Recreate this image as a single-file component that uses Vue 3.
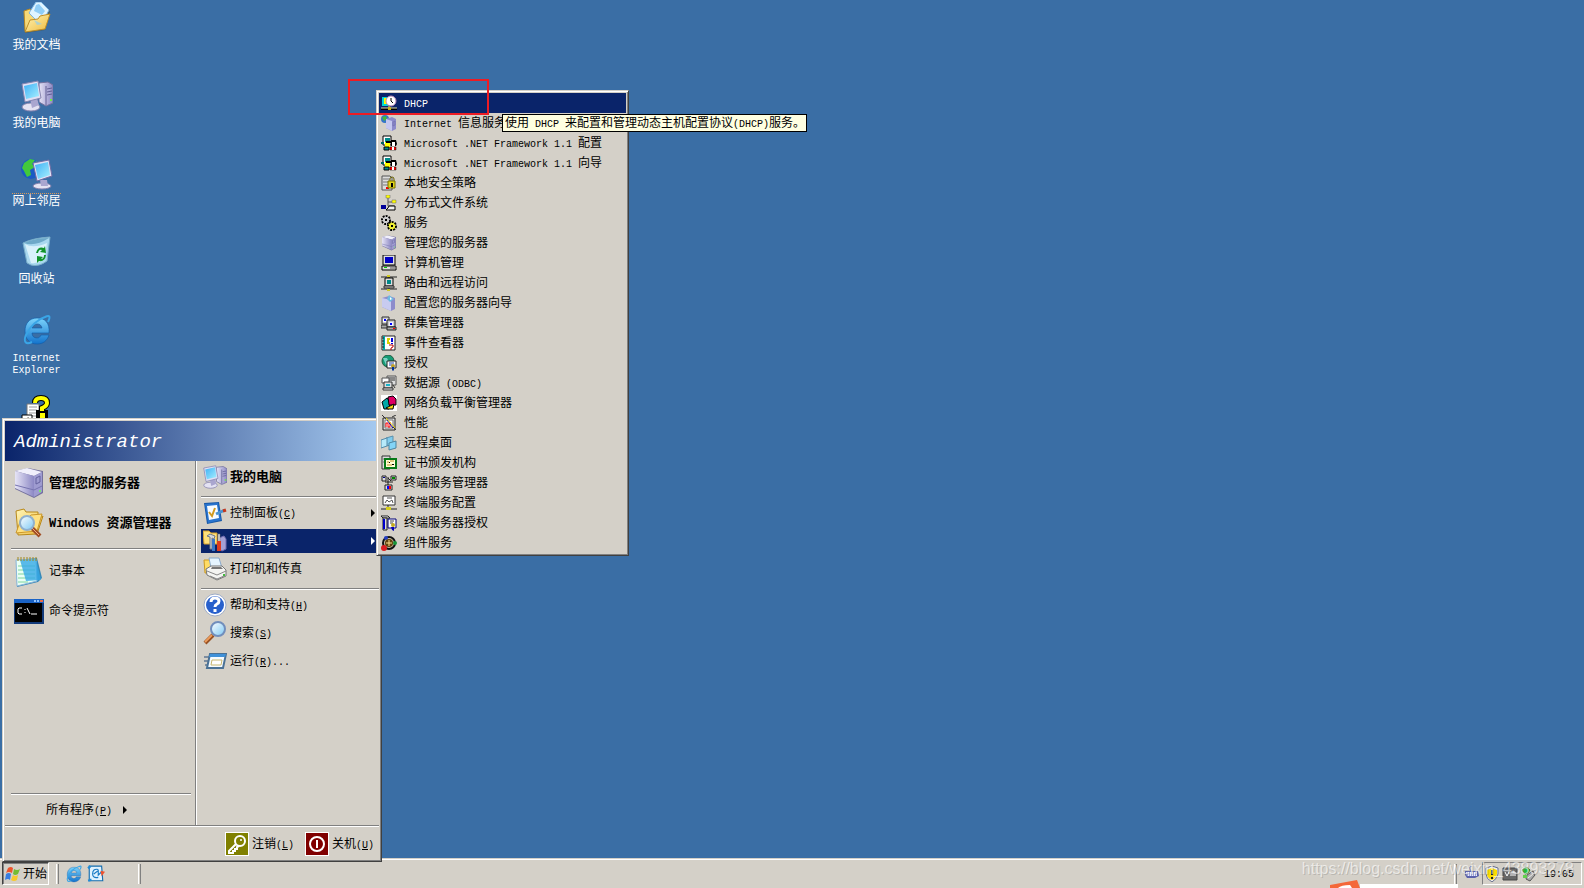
<script setup>
import { h } from 'vue'

// Latin runs use a half-width face; "&" marks the access key that follows it.
const Label = ({ text }) => {
  const parts = text.split(/([\x20-\x7e]+)/).filter(Boolean)
  return h('span', { class: 'label' }, parts.map((part) => {
    if (!/^[\x20-\x7e]+$/.test(part)) return part
    const at = part.indexOf('&')
    if (at < 0) return h('span', { class: 'latin' }, part)
    return h('span', { class: 'latin' }, [part.slice(0, at), h('u', part[at + 1]), part.slice(at + 2)])
  }))
}
Label.props = ['text']

const desktopIcons = [
  { icon: 'docs', text: '我的文档' },
  { icon: 'computer', text: '我的电脑' },
  { icon: 'network', text: '网上邻居', focus: true },
  { icon: 'bin', text: '回收站' },
  { icon: 'ie', text: 'Internet Explorer' },
  { icon: 'help-doc', text: '' },
]
const pinned = [
  { icon: 'server', text: '管理您的服务器' },
  { icon: 'explorer', text: 'Windows 资源管理器' },
]
const recent = [
  { icon: 'notepad', text: '记事本' },
  { icon: 'cmd', text: '命令提示符' },
]
const tools = [
  { icon: 'control', text: '控制面板(&C)', more: true },
  { icon: 'admin', text: '管理工具', more: true, active: true },
  { icon: 'printer', text: '打印机和传真' },
]
const help = [
  { icon: 'help', text: '帮助和支持(&H)' },
  { icon: 'search', text: '搜索(&S)' },
  { icon: 'run', text: '运行(&R)...' },
]
const adminTools = [
  ['dhcp', 'DHCP'],
  ['iis', 'Internet 信息服务'],
  ['dotnet', 'Microsoft .NET Framework 1.1 配置'],
  ['dotnet', 'Microsoft .NET Framework 1.1 向导'],
  ['policy', '本地安全策略'],
  ['dfs', '分布式文件系统'],
  ['services', '服务'],
  ['server', '管理您的服务器'],
  ['manage', '计算机管理'],
  ['routing', '路由和远程访问'],
  ['wizard', '配置您的服务器向导'],
  ['cluster', '群集管理器'],
  ['events', '事件查看器'],
  ['license', '授权'],
  ['odbc', '数据源 (ODBC)'],
  ['nlb', '网络负载平衡管理器'],
  ['perf', '性能'],
  ['remote', '远程桌面'],
  ['cert', '证书颁发机构'],
  ['tsmanager', '终端服务管理器'],
  ['tsconfig', '终端服务配置'],
  ['tslicense', '终端服务器授权'],
  ['component', '组件服务'],
]
</script>

<template>
  <svg class="defs" aria-hidden="true">
    <defs>
      <linearGradient id="g-screen" x1="0" y1="0" x2="1" y2="1"><stop offset="0" stop-color="#3fb0f5"/><stop offset="1" stop-color="#a6f0ff"/></linearGradient>
      <linearGradient id="g-box" x1="0" y1="0" x2="1" y2="0"><stop offset="0" stop-color="#e6e4f6"/><stop offset="1" stop-color="#8c88c4"/></linearGradient>
      <linearGradient id="g-folder" x1="0" y1="0" x2="1" y2="1"><stop offset="0" stop-color="#fff6b8"/><stop offset="1" stop-color="#eeb93c"/></linearGradient>
      <linearGradient id="g-glass" x1="0" y1="0" x2="1" y2="1"><stop offset="0" stop-color="#fff"/><stop offset="1" stop-color="#7cc8f4"/></linearGradient>
      <linearGradient id="g-ie" x1="0" y1="0" x2="0" y2="1"><stop offset="0" stop-color="#7bd3fb"/><stop offset="1" stop-color="#1373cc"/></linearGradient>
    </defs>
    <symbol id="docs" viewBox="0 0 32 32">
      <path d="M4 31 3 9l8-2 3 3 14-3 1 6-5 15z" fill="#5a4a20" opacity=".5"/>
      <path d="M3 9l6-2 3 3 11-2 1 18L4 29z" fill="#f6d978" stroke="#b98923"/>
      <path d="M15 0h5l8 8-8 15-12-12z" fill="#dff4ff" stroke="#7cb4e0"/>
      <path d="M15 3l3-1 6 7-3 4-8-4z" fill="#8fcdf6"/>
      <path d="M4 30 9 18l8-1 2-3 10-2-5 15z" fill="url(#g-folder)" stroke="#c08f28"/>
      <path d="M13 18l8 4-5 1z" fill="#8fcff0" opacity=".7"/>
    </symbol>
    <symbol id="computer" viewBox="0 0 32 32">
      <path d="M18 3l9-1 5 3v18l-7 3-7-4z" fill="url(#g-box)" stroke="#74719e"/>
      <path d="M25 6v19M26 9l5-1M26 12l5-1M26 15l5-1" stroke="#625f94"/><path d="M29 19h2v2h-2z" fill="#6df03c"/>
      <ellipse cx="10" cy="27" rx="9" ry="4" fill="#e4e2f2" stroke="#8581ad"/><path d="M9 19l7-1 2 7-7 3z" fill="#aaa6cf"/>
      <path d="M1 4l16-3 3 17-16 4z" fill="#e0dff4" stroke="#8785b0"/><path d="M3 6l13-3 2 13-13 3z" fill="url(#g-screen)"/>
    </symbol>
    <symbol id="network" viewBox="0 0 32 32">
      <circle cx="10" cy="11" r="10" fill="#195bc4"/><path d="M3 5l6-4 5 1-3 4 3 3-5 3 1 5-4 2-3-6-2-3z" fill="#42c93c"/><path d="M15 3l4 4-2 2-4-2z" fill="#54d44a"/>
      <ellipse cx="21" cy="28" rx="9" ry="3" fill="#e4e2f2" stroke="#8581ad"/><path d="M19 22h7l1 6h-7z" fill="#aaa6cf"/>
      <path d="M12 5l16-3 3 16-15 5z" fill="#e0dff4" stroke="#706da4"/><path d="M14 7l13-3 2 13-12 4z" fill="url(#g-screen)"/>
    </symbol>
    <symbol id="bin" viewBox="0 0 32 32">
      <path d="M2 7Q12 2 29 1l-3 24q-8 6-16 4L6 27z" fill="#a9d8ef" stroke="#79adc9"/><path d="M4 8q8 5 22-1l-3 17q-7 4-13 3z" fill="#eafaff" opacity=".75"/><path d="M3 7Q14 11 28 2 14 2 3 7z" fill="#6ea9c8"/>
      <path d="M15 17q2-7 8-5l1-2 1 7-6-1 2-2q-3-1-4 3z" fill="#12942b"/><path d="M25 19q-1 7-7 6l-2 2v-7l6 1-2 2q3 0 3-4z" fill="#12942b"/>
    </symbol>
    <symbol id="ie" viewBox="0 0 32 32">
      <path d="M16 4C8 4 4 10 4 17c0 8 5 13 12 13 6 0 10-3 12-9h-8c-1 2-2 3-4 3-3 0-5-2-5-5h17C29 9 24 4 16 4zm-5 10c1-3 3-4 5-4 3 0 4 1 5 4z" fill="url(#g-ie)" fill-rule="evenodd" stroke="#0d5ba8" stroke-width=".6"/>
      <path d="M27 8c2-4 3-8-3-5-7 2-15 9-19 18-3 7 0 10 6 7" fill="none" stroke="#3aa5e6" stroke-width="2"/>
    </symbol>
    <symbol id="help-doc" viewBox="0 -3 32 32">
      <path d="M6 9h12v24H6z" fill="#fff" stroke="#777"/><path d="M8 12h8M8 15h8M8 18h8M8 21h8" stroke="#999"/>
      <path d="M1 20h10v11H1z" fill="#fff" stroke="#000"/><path d="M4 28l3-6 3 4z"/>
      <path d="M14 8q0-5 6-5t6 5q0 3-5 5v3M18 18h6v4h-6z" fill="none" stroke="#000" stroke-width="6"/><path d="M14 8q0-5 6-5t6 5q0 3-5 5v3" fill="none" stroke="#ff0" stroke-width="4"/><path d="M19 18h5v5h-5z" fill="#ff0"/>
    </symbol>
    <symbol id="server" viewBox="0 0 32 32">
      <path d="M2 4l13-3 15 3v22l-9 5L2 22z" fill="#74719d"/><path d="M2 4l12-3 15 4-8 4z" fill="#f0effb"/>
      <path d="M2 4l19 5v21L2 21z" fill="url(#g-box)"/><path d="M21 9l8-4v20l-8 5z" fill="#9e9bd0"/>
      <path d="M2 18l19 5 8-4" fill="none" stroke="#7774b0"/><path d="M23 11l4-2v6l-4 2z" fill="none" stroke="#65629f"/><circle cx="27" cy="24" r="1" fill="#6dff50"/>
    </symbol>
    <symbol id="explorer" viewBox="0 0 32 32">
      <path d="M3 4l8-2 2 3h12v7l5-3-6 18-19 1z" fill="url(#g-folder)" stroke="#b88819"/><path d="M3 26L8 12l7-1 3-3 11-1-5 17z" fill="#ffe181" stroke="#cb972b"/>
      <path d="M19 21l8 8" stroke="#a14e26" stroke-width="4"/><path d="M19 21l7 7" stroke="#f1ac7d" stroke-width="1"/><circle cx="14" cy="16" r="7" fill="url(#g-glass)" stroke="#8fb0cf" stroke-width="2"/>
    </symbol>
    <symbol id="notepad" viewBox="0 0 32 32">
      <path d="M3 5l21-2 5 20-4 4L4 32z" fill="#3688b7"/><path d="M3 5l20-1 1 22L4 31z" fill="#e9fff4" stroke="#8db6db"/>
      <path d="M5 11h17M5 15h17M5 19h17M5 23h17M5 27h10" stroke="#7fd3a0"/><path d="M7 5l16-1 5 21-15 1z" fill="#35a9e6" opacity=".8"/><path d="M5 2v4M8 2v4M11 2v4M14 2v4M17 2v4M20 2v4M23 2v4" stroke="#a0881c" stroke-width="1"/>
    </symbol>
    <symbol id="cmd" viewBox="0 0 32 32">
      <path d="M1 4h30v25H1z" fill="#123a7a"/><path d="M1 4h30v4H1z" fill="#1a63c6"/><path d="M21 5h2v2h-2zM24 5h2v2h-2z" fill="#8ec2ff"/><path d="M27 5h3v2h-3z" fill="#e86b4a"/><path d="M2 8h27v19H2z"/>
      <path d="M9 13H6l-1 1v4l1 1h3M12 14v1M12 17v1M14 13l3 6M18 19h6" fill="none" stroke="#fff"/>
    </symbol>
    <symbol id="control" viewBox="0 0 24 24">
      <path d="M1 2l15-1 3 19-15 3z" fill="#1859a9"/><path d="M2 3l13-1 3 17-13 3z" fill="#2874cf"/><path d="M4 5l10-1 2 13-10 2z" fill="#f8fcff"/><path d="M6 11l3 4 3-8" fill="none" stroke="#d09a20" stroke-width="2"/>
      <path d="M13 13l9-4" stroke="#4a93d0" stroke-width="3"/><path d="M20 10l3-1" stroke="#c7371c" stroke-width="3"/>
    </symbol>
    <symbol id="admin" viewBox="0 0 24 24">
      <path d="M0 2h6l2 2h6v11H1z" fill="#ffe07a" stroke="#d7a12b"/><path d="M16 9l5-2 2 3v10l-4 2-3-2z" fill="#a4a0d5" stroke="#706bb0"/>
      <path d="M4 7l3-2 5 2-1 3-2-1v11H7V8z" fill="#d6d8dc" stroke="#707985"/><path d="M9 10h3v12H9z" fill="#3b77c7"/><path d="M15 5h2v8h-2z" fill="#d7d7d7" stroke="#777" stroke-width=".5"/><path d="M14 12h4v10h-4z" fill="#db3b1e"/>
    </symbol>
    <symbol id="printer" viewBox="0 0 24 24">
      <path d="M1 3h5l2 2h3v11H2z" fill="#ffdc65" stroke="#cd9a22"/><path d="M6 1h10l3 10H8z" fill="#e5f4ff" stroke="#88a8ca"/><path d="M3 12l5-3h11l4 4v6l-9 4-10-5z" fill="#f4f4f2" stroke="#777"/><path d="M4 14l10 4 9-4M7 19l7 3 7-3" fill="none" stroke="#888"/><path d="M9 10h9l2 2H8z" fill="#777"/><path d="M20 17h2v2h-2z" fill="#42ba3c"/>
    </symbol>
    <symbol id="help" viewBox="0 0 24 24"><circle cx="12" cy="12" r="11" fill="#fff" stroke="#9dabc5"/><circle cx="12" cy="12" r="9" fill="#2860cc"/><path d="M8 9q0-4 4-4t4 3q0 2-2 3t-2 3M12 16v3" fill="none" stroke="#fff" stroke-width="3"/></symbol>
    <symbol id="search" viewBox="0 0 24 24"><path d="M10 14l-8 8" stroke="#965023" stroke-width="4"/><path d="M9 14l-7 7" stroke="#ed9c5c" stroke-width="2"/><circle cx="15" cy="8" r="7" fill="url(#g-glass)" stroke="#718ebc" stroke-width="2"/></symbol>
    <symbol id="run" viewBox="0 0 24 24"><path d="M1 8h7M1 12h6M2 16h4" stroke="#7d8da0" stroke-width="2"/><path d="M7 5h16l-3 14H4z" fill="#f5fbff" stroke="#4a7195" stroke-width="2"/><path d="M7 5h16l-1 3H6z" fill="#3f91d9"/><path d="M9 11h10l-1 5H8z" fill="#fff" stroke="#c8b66e"/></symbol>
    <symbol id="key" viewBox="0 0 24 24"><path d="M0 0h24v24H0z" fill="#fff"/><path d="M1 1h22v22H1z" fill="#808000"/><circle cx="15" cy="9" r="5" fill="none" stroke="#fff" stroke-width="2"/><path d="M11 12l-7 7v2h4v-2h2v-2h2v-2l2-1" fill="none" stroke="#fff" stroke-width="2"/><circle cx="16" cy="8" r="1" fill="#fff"/></symbol>
    <symbol id="power" viewBox="0 0 24 24"><path d="M0 0h24v24H0z" fill="#fff"/><path d="M1 1h22v22H1z" fill="#800000"/><circle cx="12" cy="12" r="7" fill="none" stroke="#fff" stroke-width="2"/><path d="M12 8v8" stroke="#fff" stroke-width="2"/></symbol>
    <symbol id="flag" viewBox="0 0 16 16"><path d="M3 2q3-2 5 0L7 7Q4 5 1 7z" fill="#ed542c"/><path d="M9 3q3 2 6 0l-2 5q-3 2-5 0z" fill="#73bd32"/><path d="M1 8q3-2 5 0l-1 6q-2-2-5 0z" fill="#397de0"/><path d="M8 9q2 2 5 0l-1 5q-3 2-6 0z" fill="#f8ca2b"/></symbol>
    <symbol id="outlook" viewBox="0 0 16 16"><path d="M2 1h11l1 13H2z" fill="#dff2ff" stroke="#156dae"/><path d="M1 3l2-2M1 14l3-1" stroke="#218bd4" stroke-width="2"/><path d="M10 4q-5-1-5 4 0 4 5 3M6 8l4-3v4l3-3" fill="none" stroke="#1679c4" stroke-width="1"/><path d="M12 5l4 1-3 4z" fill="#ef512d"/></symbol>

    <symbol id="dhcp" viewBox="0 0 16 16"><path d="M1 2h6v9H1z" fill="#00d5d5"/><path d="M3 3h3v6H3z" fill="#ff0"/><circle cx="10" cy="6" r="5" fill="#fff" stroke="#b787b7"/><path d="M10 3v3l2 2" fill="none" stroke="#000"/><path d="M0 14h16" stroke="#000" stroke-width="2"/><path d="M0 13h16M8 11v3" stroke="#e0dca8"/><path d="M7 12h3v3H7z" fill="#c5b01e"/></symbol>
    <symbol id="iis" viewBox="0 0 16 16"><circle cx="4" cy="4" r="4" fill="#3575c9"/><path d="M1 2l4-1 1 3-3 2z" fill="#43b83d"/><path d="M5 4l6-2 4 2v10l-4 2-6-3z" fill="#8e8bcc"/><path d="M5 4l6 2v10l-6-3z" fill="#c5c7ef"/><path d="M12 7l2-1v4l-2 1z" fill="none" stroke="#6f6ca9" stroke-width=".6"/></symbol>
    <symbol id="dotnet" viewBox="0 0 16 16"><path d="M2 1h8v9H2z" fill="#fff" stroke="#000"/><path d="M4 3h5v5H4z" fill="#008c8c"/><path d="M0 7h3v2H0z" fill="#066"/><path d="M4 7h5v5H4z" fill="#ff0"/><path d="M5 6h5v2H5z"/><path d="M3 12h5v3H3z" fill="#088" stroke="#000"/><path d="M10 5h5l1 4-1 2h-5z"/><path d="M11 7h3v4h-3z" fill="#fff"/><path d="M9 12h6v3H9z" fill="#f00" stroke="#000" stroke-width=".5"/><path d="M11 12h2v3h-2z" fill="#fff"/></symbol>
    <symbol id="policy" viewBox="0 0 16 16"><path d="M1 1h8l2 2v12H1z" fill="#ddd" stroke="#555"/><path d="M2 4h7M2 7h6M2 10h6" stroke="#777"/><path d="M5 12h3v2H5z" fill="red"/><path d="M9 6V4q0-2 2-2t2 2v2" fill="none" stroke="#665f00"/><path d="M7 6h7v7H7z" fill="#e1d51b" stroke="#777000"/><path d="M10 8h2v4h-2z"/></symbol>
    <symbol id="dfs" viewBox="0 0 16 16"><path d="M7 3v8h6M7 7h6" fill="none" stroke="#555"/><path d="M5 0h4v3H5zM11 5h4v3h-4z" fill="#ff0" stroke="#666" stroke-width=".5"/><path d="M0 10h5v4H0z" fill="#009"/><path d="M8 11h6v4H5l2-2z" fill="#eee" stroke="#000"/></symbol>
    <symbol id="services" viewBox="0 0 16 16"><circle cx="5" cy="5" r="4" fill="#eee" stroke="#000" stroke-width="2" stroke-dasharray="2 1"/><circle cx="5" cy="5" r="3" fill="#ccc"/><circle cx="11" cy="11" r="4" fill="#ff3" stroke="#000" stroke-width="2" stroke-dasharray="2 1"/><circle cx="11" cy="11" r="3" fill="#ee3"/><path d="M4 4h2v2H4zM10 10h2v2h-2z"/></symbol>
    <symbol id="manage" viewBox="0 0 16 16"><path d="M2 0h12v10H2z" fill="#ddd" stroke="#000"/><path d="M4 2h8v6H4z" fill="#0000c5"/><path d="M1 11h14v4H1z" fill="#ddd" stroke="#000"/><path d="M3 12h3v1H3z" fill="#0c0"/><path d="M9 13h5" stroke="#555"/></symbol>
    <symbol id="routing" viewBox="0 0 16 16"><path d="M0 2h16M0 14h16M8 1v14" stroke="#222"/><path d="M4 3h8v8H4z" fill="#ddd" stroke="#000"/><path d="M6 5h4v4H6z" fill="#088"/><path d="M3 11h10v2H3z" fill="#bbb" stroke="#333"/><path d="M6 0h3v2H6zM6 14h3v2H6z" fill="#d1c91e"/></symbol>
    <symbol id="wizard" viewBox="0 0 16 16"><path d="M1 3l7-2 6 2v11l-4 2-9-4z" fill="#8e8ccb"/><path d="M1 3l9 2v11l-9-4z" fill="#c8cbf0"/><path d="M8 0l5 4-4 3-3-3z" fill="#6dbce3"/><path d="M9 2l2 2-2 1z" fill="#fff"/></symbol>
    <symbol id="cluster" viewBox="0 0 16 16"><path d="M1 2h7v7H1z" fill="#ccc" stroke="#333"/><path d="M2 4h4v3H2z" fill="#fff"/><path d="M3 4h2v2H3z" fill="#00f"/><path d="M0 10h8v3H0z" fill="#aaa" stroke="#333"/><path d="M6 5h8v7H6z" fill="#ccc" stroke="#222"/><path d="M8 7h4v4H8z" fill="#eef"/><path d="M9 8h2v2H9z" fill="#00f"/><path d="M6 12h9v3H6z" fill="#aaa" stroke="#222"/><path d="M12 13h2v1h-2z" fill="red"/></symbol>
    <symbol id="events" viewBox="0 0 16 16"><path d="M1 1h13v14H1z" fill="#fff" stroke="#222"/><path d="M3 1v14" stroke="#00a8a8" stroke-width="2"/><path d="M1 3h2M1 6h2M1 9h2M1 12h2" stroke="#222"/><path d="M6 4h3M6 6h2M6 8h3" stroke="#dbce00" stroke-width="2"/><path d="M11 3v4M11 8v1" stroke="#00d" stroke-width="2"/><path d="M8 10h4v2l-2 1v2" fill="none" stroke="#b00" stroke-width="1"/></symbol>
    <symbol id="license" viewBox="0 0 16 16"><circle cx="7" cy="6" r="6" fill="#169c76" stroke="#24593f"/><path d="M2 3h4l2 4-3 3z" fill="#7ad2c4"/><path d="M6 6h9v7H6z" fill="#fff" stroke="#222"/><path d="M8 8h5M8 10h3" stroke="#24a"/><circle cx="12" cy="11" r="2" fill="#bb9d27"/><path d="M11 12h2v4l-1-1-1 1z" fill="#039"/></symbol>
    <symbol id="odbc" viewBox="0 0 16 16"><path d="M6 1h9v9H6z" fill="#ddd" stroke="#555"/><path d="M7 3h7M7 5h7" stroke="#333"/><path d="M1 3h7v5H1z" fill="#fff" stroke="#555"/><path d="M3 7h8v6H3z" fill="#ddd" stroke="#333"/><path d="M5 9h4v2H5z" fill="#16b4ca"/><path d="M2 13h10v2H2z" fill="#eee" stroke="#333"/><path d="M12 10l2 3" stroke="#333"/></symbol>
    <symbol id="nlb" viewBox="0 0 16 16"><path d="M0 0h16v16H0z" fill="#fff"/><path d="M1 7l5-4 3 4-1 7H3z" fill="#00a8a8" stroke="#000"/><path d="M7 2l5-1 3 3v6H8z" fill="#de0064" stroke="#000"/><path d="M5 13l8-4-1 5H7z" fill="#f8dc14" stroke="#000"/></symbol>
    <symbol id="perf" viewBox="0 0 16 16"><path d="M2 3h12v12H2z" fill="#ddd" stroke="#222"/><path d="M4 5h8v8H4z" fill="#fff" stroke="#777"/><path d="M5 12V8h2v4h2V7" fill="none" stroke="red"/><path d="M6 5l6 8" stroke="#00a"/><path d="M1 0l4 4M11 2l4-2M12 12l3 3" stroke="#333"/><path d="M5 3l9 10" stroke="#ebd900"/></symbol>
    <symbol id="remote" viewBox="0 0 16 16"><path d="M5 3l7-2v8l-6 2z" fill="#80cced" stroke="#5c91ac"/><path d="M0 5l6-2v8l-6 2z" fill="#b7eafa" stroke="#548ba9"/><path d="M8 8l7-2v7l-7 2z" fill="#83d4f6" stroke="#4f859f"/></symbol>
    <symbol id="cert" viewBox="0 0 16 16"><path d="M1 1h8v13H1z" fill="#ddd" stroke="#333"/><path d="M2 4h5M2 7h5" stroke="#777"/><path d="M4 4h11v9H4z" fill="#ffffd8" stroke="#087a17" stroke-width="2"/><path d="M6 7h2M9 6h4M6 10h5" stroke="#bd9420"/><path d="M8 7h1v1H8zM11 9h2v1h-2z" fill="#000"/></symbol>
    <symbol id="tsmanager" viewBox="0 0 16 16"><path d="M1 1h4v5H1zM10 1h5v4h-5zM4 10h7v5H4z" fill="#ddd" stroke="#222"/><path d="M2 2h2v1H2z" fill="#008"/><path d="M11 2h3v2h-3z" fill="#080"/><path d="M4 7h8M7 2v8M7 3l3 3" fill="none" stroke="#222"/><path d="M6 11h2v3H6z" fill="#00f"/><path d="M8 11h2v3H8z" fill="red"/></symbol>
    <symbol id="tsconfig" viewBox="0 0 16 16"><path d="M2 1h12v9H2z" fill="#fff" stroke="#333"/><path d="M4 8l2-3 2 2 3-2 1 3M6 3h5" fill="none" stroke="#555"/><path d="M7 10v3M0 14h16" stroke="#222"/><path d="M5 12h5v3H5z" fill="#d7cf1c"/></symbol>
    <symbol id="tslicense" viewBox="0 0 16 16"><path d="M0 1h7l2 2H2z" fill="#fff" stroke="#222"/><path d="M2 3h4v12H2z" fill="#ddd" stroke="#222"/><path d="M3 4v10" stroke="#00c" stroke-width="2"/><path d="M7 4h8v9H7z" fill="#fff" stroke="#007"/><path d="M9 6h4M9 8h3" stroke="#444"/><circle cx="12" cy="10" r="2" fill="#c3ac20"/><path d="M10 12h3v4l-2-1z" fill="#00b"/></symbol>
    <symbol id="component" viewBox="0 0 16 16"><circle cx="8" cy="8" r="6" fill="#c9c2a8" stroke="#111" stroke-width="2"/><circle cx="5" cy="3" r="2" fill="#233dc0"/><circle cx="14" cy="8" r="2" fill="#159437"/><circle cx="3" cy="13" r="3" fill="#db1e20"/><circle cx="8" cy="8" r="4" fill="#60410c"/><path d="M8 5v6M5 8h6" stroke="#ffe18d"/></symbol>

    <symbol id="ime" viewBox="0 3 16 16"><path d="M1 8h13l1 5-4 2H3l-2-3z" fill="#5b62ac"/><path d="M2 9h11v4H3z" fill="#e9ebff"/><path d="M3 10h10M3 12h10" stroke="#5560b1" stroke-dasharray="1 1"/><path d="M7 8q-3-4 1-5" fill="none" stroke="#6472af"/></symbol>
    <symbol id="shield" viewBox="0 0 16 16"><path d="M8 0l6 2v6q-1 5-6 8-6-3-6-8V2z" fill="#eee" stroke="#68708c"/><path d="M8 2l5 2v4q-1 4-5 6-5-2-5-6V4z" fill="#fbdc00"/><path d="M8 4v5M8 11v2" stroke="#222" stroke-width="2"/></symbol>
    <symbol id="vm" viewBox="0 0 16 16"><path d="M1 2h14v12H1z" fill="#686868" stroke="#444"/><path d="M3 6l2 4 2-4M9 10V6h2v4M11 6h2v4" fill="none" stroke="#fff"/></symbol>
    <symbol id="eject" viewBox="0 0 16 16"><path d="M7 9l6-4 2 4-5 6-4-2z" fill="#aaa" stroke="#555"/><path d="M8 12l5-4" stroke="#eee"/><path d="M2 4l4-3 4 3-2 3-3 1z" fill="#24bc34" stroke="#14761f"/><path d="M3 9h4v3H3z" fill="#62cf4d"/></symbol>
  </svg>

  <main class="screen">
    <nav class="desktop" aria-label="桌面">
      <a v-for="item in desktopIcons" :key="item.icon" href="#" class="shortcut">
        <svg class="i32"><use :href="'#' + item.icon" /></svg>
        <Label :text="item.text" :class="{ focused: item.focus }" />
      </a>
    </nav>

    <section class="start-menu raised">
      <header class="user">Administrator</header>
      <div class="columns">
        <div class="column left">
          <button v-for="item in pinned" :key="item.icon" class="program bold">
            <svg class="i32"><use :href="'#' + item.icon" /></svg><Label :text="item.text" />
          </button>
          <hr>
          <button v-for="item in recent" :key="item.icon" class="program">
            <svg class="i32"><use :href="'#' + item.icon" /></svg><Label :text="item.text" />
          </button>
          <hr class="push">
          <button class="all"><Label text="所有程序(&P)" /><i class="arrow"></i></button>
        </div>
        <div class="column right">
          <button class="place bold"><svg class="i24"><use href="#computer" /></svg><Label text="我的电脑" /></button>
          <hr>
          <button v-for="item in tools" :key="item.icon" class="place" :class="{ active: item.active }">
            <svg class="i24"><use :href="'#' + item.icon" /></svg><Label :text="item.text" /><i v-if="item.more" class="arrow"></i>
          </button>
          <hr>
          <button v-for="item in help" :key="item.icon" class="place">
            <svg class="i24"><use :href="'#' + item.icon" /></svg><Label :text="item.text" />
          </button>
        </div>
      </div>
      <footer class="session">
        <button><svg class="i24"><use href="#key" /></svg><Label text="注销(&L)" /></button>
        <button><svg class="i24"><use href="#power" /></svg><Label text="关机(&U)" /></button>
      </footer>
    </section>

    <section class="submenu raised">
      <button v-for="([icon, text], i) in adminTools" :key="i" :class="{ active: i === 0 }">
        <svg class="i16"><use :href="'#' + icon" /></svg><Label :text="text" />
      </button>
    </section>
    <div class="tooltip" role="tooltip"><Label text="使用 DHCP 来配置和管理动态主机配置协议(DHCP)服务。" /></div>
    <div class="mark"></div>

    <footer class="taskbar">
      <button class="start"><svg class="i16"><use href="#flag" /></svg><Label text="开始" /></button>
      <i class="divider"></i>
      <div class="quick">
        <button aria-label="Internet Explorer"><svg class="i18"><use href="#ie" /></svg></button>
        <button aria-label="Outlook Express"><svg class="i18"><use href="#outlook" /></svg></button>
      </div>
      <i class="divider"></i>
      <i class="divider end"></i>
      <svg class="i16 ime"><use href="#ime" /></svg>
      <div class="tray">
        <svg class="i16"><use href="#shield" /></svg>
        <svg class="i16"><use href="#vm" /></svg>
        <svg class="i16"><use href="#eject" /></svg>
        <time>19:05</time>
      </div>
    </footer>
    <svg class="badge" viewBox="0 0 128 8"><path d="M30 4h98v4H30z" fill="#fff"/><path d="M0 5l27-5 3 8H0z" fill="#f4683a"/><path d="M8 8q3-3 12-3l2 3z" fill="#fff"/></svg>
    <div class="watermark">https://blog.csdn.net/weixin_43893278</div>
  </main>
</template>

<style>
html, body { background: #3a6ea5; overflow: hidden; }
.label { display: block; padding-bottom: 2px; line-height: 12px; white-space: pre; }
.label .latin { font-family: "Liberation Mono", monospace; font-size: 10px; line-height: 0; }
.label u { text-decoration: underline; text-underline-offset: 1px; }
.bold .label .latin { font-size: 12px; }
.shortcut .label .latin { white-space: pre-wrap; }
</style>

<style scoped>
.defs { position: absolute; width: 0; height: 0; }
.screen {
  position: relative; display: flex; flex-direction: column; min-height: 100vh; overflow: hidden;
  background: #3a6ea5; color: #000;
  font: 12px/12px "Noto Sans CJK SC", sans-serif;
}
button { display: flex; align-items: center; border: 0; padding: 0; margin: 0; background: none; color: inherit; font: inherit; text-align: left; }
svg { flex: none; }
.i16 { width: 16px; height: 16px; }
.i18 { width: 18px; height: 18px; }
.i24 { width: 24px; height: 24px; }
.i32 { width: 32px; height: 32px; }
.bold { font-size: 13px; font-weight: 700; }
hr { width: auto; height: 0; border: 0; border-top: 1px solid #808080; border-bottom: 1px solid #fff; margin: 5px 0 1px; }
.raised {
  background: #d4d0c8; border: 1px solid; border-color: #d4d0c8 #404040 #404040 #d4d0c8;
  box-shadow: inset 1px 1px #fff, inset -1px -1px #808080;
}
.arrow { width: 0; height: 0; border: 4px solid transparent; border-left-color: currentColor; border-right-width: 0; }

.desktop { flex: 1; display: flex; flex-direction: column; align-items: flex-start; gap: 30px; padding-top: 2px; max-height: 856px; }
.shortcut { display: flex; flex-direction: column; align-items: center; gap: 4px; width: 73px; height: 48px; flex: none; color: #fff; text-align: center; text-decoration: none; }
.shortcut .label { max-width: 64px; }
.focused { margin-top: -1px; border-top: 1px dotted #d79a5c; }

.start-menu { position: absolute; left: 2px; bottom: 26px; width: 380px; box-sizing: border-box; padding: 2px; }
.user {
  height: 40px; padding-left: 9px; color: #fff; background: linear-gradient(90deg, #0a246a, #a6caf0);
  font: italic 19px/42px "Liberation Mono", monospace;
}
.columns { display: flex; min-height: 364px; }
.column { display: flex; flex-direction: column; }
.left { width: 180px; padding: 2px 4px 0 6px; border-right: 1px solid #808080; }
.right { flex: 1; padding: 2px 0 0 4px; border-left: 1px solid #fff; }
.program { height: 40px; gap: 4px; padding-left: 2px; }
.left hr.push { margin: auto 0 0; }
.all { height: 30px; padding-left: 35px; gap: 11px; }
.place { height: 24px; margin: 2px 0; padding: 0 4px 0 2px; gap: 3px; }
.place .arrow { margin-left: auto; }
.active { background: #0a246a; color: #fff; }
.session { display: flex; justify-content: flex-end; gap: 11px; height: 31px; padding: 2px 5px 0 0; border-top: 1px solid #808080; box-shadow: inset 0 1px #fff; }
.session button { gap: 3px; }

.submenu { position: absolute; left: 376px; top: 90px; width: 253px; box-sizing: border-box; padding: 2px; }
.submenu button { width: 100%; height: 20px; padding-left: 2px; gap: 7px; }
.tooltip { position: absolute; left: 502px; top: 114px; padding: 1px 1px 1px 2px; border: 1px solid #000; background: #ffffe1; white-space: nowrap; }
.mark { position: absolute; left: 348px; top: 79px; width: 137px; height: 32px; border: 2px solid #ed1c24; }

.taskbar { display: flex; align-items: center; box-sizing: border-box; height: 30px; padding: 2px; background: #d4d0c8; border-top: 1px solid #d4d0c8; box-shadow: inset 0 1px #fff; }
.start { box-sizing: border-box; width: 47px; height: 23px; padding-left: 2px; gap: 2px; border: 1px solid; border-color: #404040 #fff #fff #404040; box-shadow: inset 1px 1px #808080; }
.divider { width: 1px; height: 20px; margin-left: 7px; border-left: 1px solid #fff; border-right: 1px solid #808080; }
.quick { display: flex; gap: 4px; width: 73px; margin-left: 6px; }
.divider + .quick + .divider { margin-left: 0; }
.divider.end { margin-left: auto; }
.ime { margin: 0 2px 0 7px; }
.tray { display: flex; align-items: center; box-sizing: border-box; height: 23px; padding: 0 7px 0 1px; gap: 2px; border: 1px solid; border-color: #808080 #fff #fff #808080; }
.tray time { margin-left: 6px; padding-top: 3px; font: 10px/12px "Liberation Mono", monospace; }
.badge { position: absolute; right: 126px; bottom: 0; width: 128px; height: 8px; }
.watermark { position: absolute; right: 10px; bottom: 9px; color: rgba(255, 255, 255, 0.6); font: 16px/20px "Liberation Sans", sans-serif; text-shadow: 1px 1px rgba(120, 120, 120, 0.3); }
</style>
